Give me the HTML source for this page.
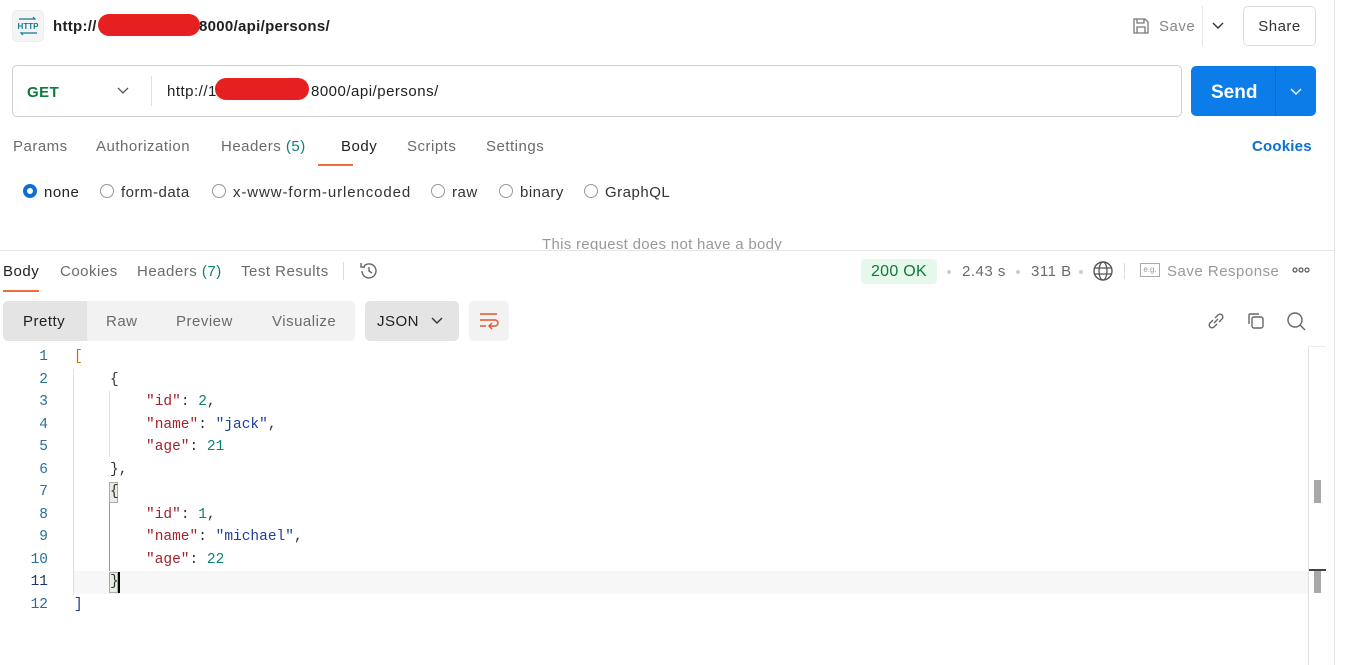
<!DOCTYPE html>
<html><head><meta charset="utf-8"><style>
*{box-sizing:border-box;margin:0;padding:0}
body{width:1346px;height:665px;overflow:hidden;background:#fff;font-family:"Liberation Sans",Arial,sans-serif;color:#212121;position:relative;font-size:15px;letter-spacing:0.5px}
.a{position:absolute;white-space:nowrap}
.g{color:#6b6b6b}
.mono{font-family:"Liberation Mono",monospace;font-size:14.5px;letter-spacing:0}
.ln{position:absolute;left:0;width:48px;text-align:right;color:#2a6f9c;font-family:"Liberation Mono",monospace;font-size:14.5px;letter-spacing:0}
.k{color:#a0232c}.n{color:#0b8276}.s{color:#1a3ea0}.p{color:#333}
.radio{position:absolute;width:14px;height:14px;border:1px solid #999;border-radius:50%}
</style></head><body>
<div class="a" style="left:1334px;top:0;width:1px;height:665px;background:#e6e6e6"></div>

<div class="a" style="left:12px;top:10px;width:32px;height:32px;background:#f4f4f4;border-radius:5px;border:1px solid #eee"></div>
<svg class="a" style="left:16px;top:14px" width="24" height="24" viewBox="0 0 24 24"><path d="M3 5h16l-2-2M21 19H5l2 2" stroke="#127b8a" stroke-width="1.2" fill="none"/><text x="12" y="15" font-size="8" font-family="Liberation Sans" text-anchor="middle" fill="#127b8a" font-weight="bold" letter-spacing="0">HTTP</text></svg>
<div class="a" style="left:53px;top:18px;font-weight:bold;letter-spacing:0.3px">http://</div>
<div class="a" style="left:199px;top:18px;font-weight:bold;letter-spacing:0.3px">8000/api/persons/</div>
<div class="a" style="left:98px;top:14px;width:102px;height:22px;background:#e62020;border-radius:11px"></div>

<svg class="a" style="left:1131px;top:16px" width="20" height="20" viewBox="0 0 20 20"><path d="M3 3h11l3 3v11H3z M6 3v4h7V3 M6 17v-6h8v6" stroke="#777" stroke-width="1.3" fill="none"/></svg>
<div class="a" style="left:1159px;top:18px;color:#888">Save</div>
<div class="a" style="left:1202px;top:6px;width:1px;height:40px;background:#e6e6e6"></div>
<svg class="a" style="left:1211px;top:20px" width="14" height="12"><path d="M2 3l5 5 5-5" stroke="#333" stroke-width="1.4" fill="none"/></svg>
<div class="a" style="left:1243px;top:6px;width:73px;height:40px;border:1px solid #ddd;border-radius:5px;text-align:center;line-height:40px;color:#333">Share</div>

<div class="a" style="left:12px;top:65px;width:1170px;height:52px;border:1px solid #cfcfcf;border-radius:5px"></div>
<div class="a" style="left:27px;top:84px;font-weight:bold;color:#0b7a3a">GET</div>
<svg class="a" style="left:116px;top:85px" width="14" height="12"><path d="M2 3l5 5 5-5" stroke="#555" stroke-width="1.3" fill="none"/></svg>
<div class="a" style="left:151px;top:76px;width:1px;height:30px;background:#e0e0e0"></div>
<div class="a" style="left:167px;top:83px">http://1</div>
<div class="a" style="left:311px;top:83px">8000/api/persons/</div>
<div class="a" style="left:215px;top:78px;width:94px;height:22px;background:#e62020;border-radius:11px"></div>
<div class="a" style="left:1191px;top:66px;width:125px;height:50px;background:#0c7ce8;border-radius:5px"></div>
<div class="a" style="left:1275px;top:66px;width:1px;height:50px;background:#0a6cd0"></div>
<div class="a" style="left:1211px;top:82px;font-size:19px;font-weight:bold;color:#fff;letter-spacing:0">Send</div>
<svg class="a" style="left:1289px;top:86px" width="14" height="12"><path d="M2 3l5 5 5-5" stroke="#fff" stroke-width="1.4" fill="none"/></svg>

<div class="a g" style="left:13px;top:138px">Params</div>
<div class="a g" style="left:96px;top:138px">Authorization</div>
<div class="a g" style="left:221px;top:138px">Headers <span style="color:#0b8276">(5)</span></div>
<div class="a" style="left:341px;top:138px">Body</div>
<div class="a" style="left:318px;top:164px;width:35px;height:2px;background:#f26b3a"></div>
<div class="a g" style="left:407px;top:138px">Scripts</div>
<div class="a g" style="left:486px;top:138px">Settings</div>
<div class="a" style="left:1252px;top:138px;font-weight:bold;color:#0c6fd1;letter-spacing:0.2px">Cookies</div>

<div class="radio" style="left:23px;top:184px;border:4px solid #0c6fd1"></div>
<div class="a" style="left:44px;top:184px">none</div>
<div class="radio" style="left:100px;top:184px"></div>
<div class="a" style="left:121px;top:184px;color:#333">form-data</div>
<div class="radio" style="left:212px;top:184px"></div>
<div class="a" style="left:233px;top:184px;color:#333;letter-spacing:0.9px">x-www-form-urlencoded</div>
<div class="radio" style="left:431px;top:184px"></div>
<div class="a" style="left:452px;top:184px;color:#333">raw</div>
<div class="radio" style="left:499px;top:184px"></div>
<div class="a" style="left:520px;top:184px;color:#333">binary</div>
<div class="radio" style="left:584px;top:184px"></div>
<div class="a" style="left:605px;top:184px;color:#333">GraphQL</div>

<div class="a" style="left:0;top:232px;width:1334px;height:18px;overflow:hidden"><div class="a" style="left:542px;top:4px;color:#999;letter-spacing:0.3px">This request does not have a body</div></div>
<div class="a" style="left:0;top:250px;width:1334px;height:1px;background:#e6e6e6"></div>

<div class="a" style="left:3px;top:263px">Body</div>
<div class="a" style="left:3px;top:290px;width:36px;height:2px;background:#f26b3a"></div>
<div class="a g" style="left:60px;top:263px">Cookies</div>
<div class="a g" style="left:137px;top:263px">Headers <span style="color:#0b8276">(7)</span></div>
<div class="a g" style="left:241px;top:263px">Test Results</div>
<div class="a" style="left:343px;top:262px;width:1px;height:18px;background:#ddd"></div>
<svg class="a" style="left:358px;top:260px" width="22" height="22" viewBox="0 0 22 22"><path d="M4 11a7 7 0 1 0 2-5M3 3v4h4M11 7v4l3 2" stroke="#666" stroke-width="1.4" fill="none"/></svg>

<div class="a" style="left:861px;top:259px;width:76px;height:25px;background:#e6f8ec;border-radius:4px;color:#0b7a3a;font-size:16px;text-align:center;line-height:25px;letter-spacing:0.3px">200 OK</div>
<div class="a" style="left:947px;top:270px;width:4px;height:4px;border-radius:50%;background:#ccc"></div>
<div class="a g" style="left:962px;top:263px">2.43 s</div>
<div class="a" style="left:1016px;top:270px;width:4px;height:4px;border-radius:50%;background:#ccc"></div>
<div class="a g" style="left:1031px;top:263px">311 B</div>
<div class="a" style="left:1079px;top:270px;width:4px;height:4px;border-radius:50%;background:#ccc"></div>
<svg class="a" style="left:1092px;top:260px" width="22" height="22" viewBox="0 0 22 22"><circle cx="11" cy="11" r="9" stroke="#555" stroke-width="1.4" fill="none"/><ellipse cx="11" cy="11" rx="4" ry="9" stroke="#555" stroke-width="1.3" fill="none"/><path d="M2 8h18M2 14h18" stroke="#555" stroke-width="1.3"/></svg>
<div class="a" style="left:1124px;top:263px;width:1px;height:16px;background:#ddd"></div>
<div class="a" style="left:1140px;top:263px;width:20px;height:14px;border:1px solid #aaa;font-size:8px;color:#999;text-align:center;line-height:12px;letter-spacing:0">e.g.</div>
<div class="a" style="left:1167px;top:263px;color:#999">Save Response</div>
<svg class="a" style="left:1292px;top:266px" width="18" height="8"><circle cx="3" cy="4" r="2" fill="none" stroke="#555" stroke-width="1.2"/><circle cx="9" cy="4" r="2" fill="none" stroke="#555" stroke-width="1.2"/><circle cx="15" cy="4" r="2" fill="none" stroke="#555" stroke-width="1.2"/></svg>

<div class="a" style="left:3px;top:301px;width:352px;height:40px;background:#f2f2f2;border-radius:5px"></div>
<div class="a" style="left:3px;top:301px;width:84px;height:40px;background:#e4e4e4;border-radius:5px 0 0 5px"></div>
<div class="a" style="left:23px;top:313px">Pretty</div>
<div class="a g" style="left:106px;top:313px">Raw</div>
<div class="a g" style="left:176px;top:313px">Preview</div>
<div class="a g" style="left:272px;top:313px">Visualize</div>
<div class="a" style="left:365px;top:301px;width:94px;height:40px;background:#e4e4e4;border-radius:5px"></div>
<div class="a" style="left:377px;top:313px">JSON</div>
<svg class="a" style="left:430px;top:315px" width="14" height="12"><path d="M2 3l5 5 5-5" stroke="#333" stroke-width="1.4" fill="none"/></svg>
<div class="a" style="left:469px;top:301px;width:40px;height:40px;background:#f2f2f2;border-radius:5px"></div>
<svg class="a" style="left:478px;top:311px" width="22" height="20" viewBox="0 0 22 20"><path d="M2 3h17M2 9h15a3 3 0 0 1 0 6h-5M14 12l-3 3 3 3M2 15h6" stroke="#e8542a" stroke-width="1.4" fill="none"/></svg>

<svg class="a" style="left:1205px;top:310px" width="22" height="22" viewBox="0 0 22 22"><path d="M9 13l4-4M8 10l-3 3a2.5 2.5 0 0 0 4 4l3-3M14 12l3-3a2.5 2.5 0 0 0-4-4l-3 3" stroke="#666" stroke-width="1.4" fill="none"/></svg>
<svg class="a" style="left:1245px;top:310px" width="22" height="22" viewBox="0 0 22 22"><rect x="7" y="7" width="11" height="11" rx="2" stroke="#666" stroke-width="1.4" fill="none"/><path d="M4 14V5a1 1 0 0 1 1-1h9" stroke="#666" stroke-width="1.4" fill="none"/></svg>
<svg class="a" style="left:1285px;top:310px" width="22" height="22" viewBox="0 0 22 22"><circle cx="10" cy="10" r="7" stroke="#666" stroke-width="1.4" fill="none"/><path d="M15 15l5 5" stroke="#666" stroke-width="1.4"/></svg>

<div class="a" style="left:1308px;top:346px;width:1px;height:319px;background:#e0e0e0"></div>
<div class="a" style="left:1308px;top:346px;width:18px;height:1px;background:#eee"></div>
<div class="a" style="left:1314px;top:480px;width:7px;height:23px;background:#a8a8a8"></div>
<div class="a" style="left:1309px;top:569px;width:17px;height:2px;background:#444"></div>
<div class="a" style="left:1314px;top:571px;width:7px;height:22px;background:#a8a8a8"></div>
<div class="a" style="left:73px;top:571px;width:1235px;height:23px;background:#f7f7f7"></div>
<div class="a" style="left:73px;top:369px;width:1px;height:226px;background:#e0e0e0"></div>
<div class="a" style="left:109px;top:391px;width:1px;height:66px;background:#e0e0e0"></div>
<div class="a" style="left:109px;top:503px;width:1px;height:68px;background:#999"></div>
<div class="a" style="left:109px;top:482px;width:9px;height:21px;background:#e8ede4;border:1px solid #aaa"></div>
<div class="a" style="left:109px;top:572px;width:9px;height:21px;background:#e8ede4;border:1px solid #aaa"></div>
<div class="a" style="left:118px;top:572px;width:2px;height:21px;background:#000"></div>

<div class="ln" style="top:349px">1</div>
<div class="ln" style="top:372px">2</div>
<div class="ln" style="top:394px">3</div>
<div class="ln" style="top:417px">4</div>
<div class="ln" style="top:439px">5</div>
<div class="ln" style="top:462px">6</div>
<div class="ln" style="top:484px">7</div>
<div class="ln" style="top:507px">8</div>
<div class="ln" style="top:529px">9</div>
<div class="ln" style="top:552px">10</div>
<div class="ln" style="top:574px;color:#1b3a60">11</div>
<div class="ln" style="top:597px">12</div>

<div class="a mono" style="left:74px;top:349px;color:#c07a00">[</div>
<div class="a mono p" style="left:110px;top:372px">{</div>
<div class="a mono" style="left:146px;top:394px"><span class="k">"id"</span><span class="p">: </span><span class="n">2</span><span class="p">,</span></div>
<div class="a mono" style="left:146px;top:417px"><span class="k">"name"</span><span class="p">: </span><span class="s">"jack"</span><span class="p">,</span></div>
<div class="a mono" style="left:146px;top:439px"><span class="k">"age"</span><span class="p">: </span><span class="n">21</span></div>
<div class="a mono p" style="left:110px;top:462px">},</div>
<div class="a mono p" style="left:110px;top:484px">{</div>
<div class="a mono" style="left:146px;top:507px"><span class="k">"id"</span><span class="p">: </span><span class="n">1</span><span class="p">,</span></div>
<div class="a mono" style="left:146px;top:529px"><span class="k">"name"</span><span class="p">: </span><span class="s">"michael"</span><span class="p">,</span></div>
<div class="a mono" style="left:146px;top:552px"><span class="k">"age"</span><span class="p">: </span><span class="n">22</span></div>
<div class="a mono p" style="left:110px;top:574px">}</div>
<div class="a mono" style="left:74px;top:597px;color:#1a3ea0">]</div>
</body></html>
